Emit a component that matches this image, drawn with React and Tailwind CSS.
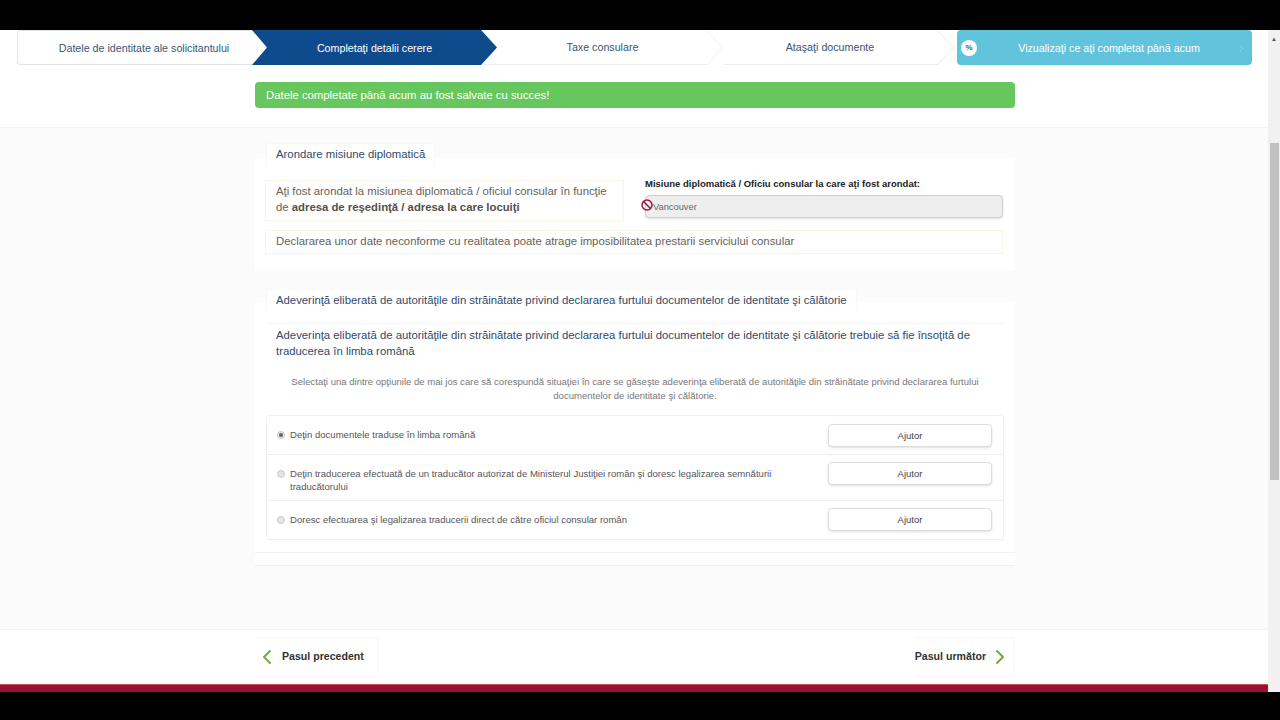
import { ChevronLeft, ChevronRight, Ban } from "lucide-react";

const options = [
  { text: "Deţin documentele traduse în limba română", checked: true, rowClass: "h-[39px]" },
  {
    text: "Deţin traducerea efectuată de un traducător autorizat de Ministerul Justiţiei român şi doresc legalizarea semnăturii traducătorului",
    rowClass: "h-[46px]",
  },
  { text: "Doresc efectuarea şi legalizarea traducerii direct de către oficiul consular român", rowClass: "h-[39px]" },
];

const StepArrow = ({ className }) => (
  <svg viewBox="0 0 16 35" preserveAspectRatio="none" className={`h-[35px] shrink-0 ${className}`}>
    <path d="M0 0 L15 17.5 L0 35" fill="none" stroke="#f0f0f0" strokeWidth="1" />
  </svg>
);

const Stepper = () => (
  <div className="flex h-[35px] pl-[17px] pr-[16px] text-[10.7px] text-[#3a5675]">
    <div className="flex w-[237px] items-center justify-center rounded-l-sm border-y border-l border-[#e4e4e4] bg-white pl-[16px] pt-[1px]">
      Datele de identitate ale solicitantului
    </div>
    <div className="relative z-10 -ml-[2px] flex w-[245px] items-center justify-center bg-[#0f4a8c] pt-[1px] text-white [clip-path:polygon(0_0,93.5%_0,100%_50%,93.5%_100%,0_100%,6.1%_50%)]">
      Completaţi detalii cerere
    </div>
    <div className="-ml-[14px] flex w-[224px] items-center justify-center border-b border-[#eeeeee] bg-white pl-[15px] pt-[1px]">
      Taxe consulare
    </div>
    <StepArrow className="w-[16px]" />
    <div className="flex w-[214px] items-center justify-center border-b border-[#eeeeee] bg-white pt-[1px]">
      Ataşaţi documente
    </div>
    <StepArrow className="w-[18px]" />
    <div className="ml-[2px] flex w-[295px] items-center rounded-sm bg-[#62c4dc] pl-[4px] pr-[6px] pt-[1px] text-white">
      <span className="flex h-[16px] w-[16px] items-center justify-center rounded-full bg-white text-[8px] font-bold text-[#44606e]">%</span>
      <span className="flex-1 pl-[4px] text-center">Vizualizaţi ce aţi completat până acum</span>
      <ChevronRight size={9} className="text-[#9adcec]" />
    </div>
  </div>
);

const Tab = ({ children }) => (
  <div className="relative z-10 ml-[11px] flex h-[22px] w-fit items-center border-x border-t border-[#f8f8f8] bg-white px-[9px] text-[11.33px] text-[#2f4a6b]">
    {children}
  </div>
);

const App = () => (
  <div className="flex h-[720px] flex-col overflow-hidden bg-black font-['Liberation_Sans',Arial,sans-serif]">
    <div className="mt-[30px] flex h-[662px]">
      <div className="flex w-[1268px] flex-col bg-white">
        <Stepper />

        <div className="mx-auto mt-[17px] flex h-[26px] w-[760px] translate-x-[1px] items-center rounded-sm bg-[#66c75f] px-[11px] text-[11.33px] text-white">
          Datele completate până acum au fost salvate cu succes!
        </div>

        <div className="mt-[19px] flex flex-1 flex-col items-center border-y border-[#f3f3f3] bg-[#fbfbfb] pt-[15px]">
          <div className="w-[760px] translate-x-[1px]">
            <Tab>Arondare misiune diplomatică</Tab>
            <div className="-mt-[7px] h-[113px] bg-white px-[10px] pt-[22px]">
              <div className="flex items-start">
                <div className="h-[41px] w-[359px] border border-[#f8f4e8] px-[10px] py-[2px] text-[11.33px] leading-[16px] text-[#66625a]">
                  Aţi fost arondat la misiunea diplomatică / oficiul consular în funcţie de <b className="text-[#55504a]">adresa de reşedinţă / adresa la care locuiţi</b>
                </div>
                <div className="ml-[21px] flex-1">
                  <div className="-mt-[2px] h-[17px] text-[9.5px] font-bold leading-[12px] text-[#222222]">
                    Misiune diplomatică / Oficiu consular la care aţi fost arondat:
                  </div>
                  <div className="relative flex h-[23px] w-[358px] items-center rounded-sm border border-[#d0d0d0] bg-[#eeeeee] pl-[7px] pt-[2px] text-[9.3px] text-[#66666a] shadow-sm">
                    <Ban size={12} strokeWidth={3} className="absolute -left-[5px] top-[3px] text-[#a01840]" />
                    Vancouver
                  </div>
                </div>
              </div>
              <div className="mt-[9px] flex h-[24px] w-[738px] items-center border border-[#f8f4e8] px-[10px] pb-[2px] text-[11.33px] text-[#66625a]">
                Declararea unor date neconforme cu realitatea poate atrage imposibilitatea prestarii serviciului consular
              </div>
            </div>

            <div className="mt-[18px]">
              <Tab>Adeverinţă eliberată de autorităţile din străinătate privind declararea furtului documentelor de identitate şi călătorie</Tab>
            </div>
            <div className="-mt-[9px] h-[264px] border-b border-[#efefef] bg-white px-[11px] pt-[21px]">
              <div className="h-[64px] border-t border-[#f3f3f3] px-[10px] pt-[3px] text-[11.33px] leading-[16px] text-[#2f4a6b]">
                Adeverinţa eliberată de autorităţile din străinătate privind declararea furtului documentelor de identitate şi călătorie trebuie să fie însoţită de traducerea în limba română
              </div>
              <p className="-mt-[12px] px-[20px] text-center text-[9.55px] leading-[14px] text-[#77777a]">
                Selectaţi una dintre opţiunile de mai jos care să corespundă situaţiei în care se găseşte adeverinţa eliberată de autorităţile din străinătate privind declararea furtului documentelor de identitate şi călătorie.
              </p>
              <div className="mt-[12px] w-[738px] rounded-sm border-x border-t border-[#f0f0f0]">
                {options.map((o) => (
                  <div key={o.text} className={`flex items-start border-b border-[#eeeeee] pl-[10px] pr-[11px] pt-[7px] ${o.rowClass}`}>
                    <span className="mt-[8px] flex h-[8px] w-[8px] shrink-0 items-center justify-center rounded-full border border-[#c8c8c8] bg-[#e4e4e4]">
                      {o.checked && <span className="h-[4px] w-[4px] rounded-full bg-[#666666]" />}
                    </span>
                    <span className="ml-[5px] mt-[5px] w-[500px] text-[9.55px] leading-[13px] text-[#55555a]">{o.text}</span>
                    <button className={`ml-auto h-[23px] w-[164px] rounded-sm border border-[#dddddd] bg-white pt-[1px] text-[9.5px] text-[#444444] shadow-sm ${o.checked ? "mt-[1px]" : ""}`}>
                      Ajutor
                    </button>
                  </div>
                ))}
              </div>
              <div className="-mx-[11px] mt-[12px] border-t border-[#f0f0f0]" />
            </div>
          </div>
        </div>

        <div className="flex h-[54px] items-center justify-between bg-white pl-[255px] pr-[254px] text-[10.6px] font-bold text-[#333333]">
          <div className="flex h-[40px] items-center border-y border-r border-[#f8f8f8] pr-[14px]">
            <ChevronLeft size={24} strokeWidth={2} className="mr-[3px] text-[#78a83c]" />
            Pasul precedent
          </div>
          <div className="flex h-[40px] items-center border-y border-r border-[#f8f8f8] pr-[1px]">
            Pasul următor
            <ChevronRight size={24} strokeWidth={2} className="ml-[2px] text-[#78a83c]" />
          </div>
        </div>
        <div className="h-[8px] border-t border-[#c85060] bg-[#9c1030]" />
      </div>

      <div className="flex w-[12px] flex-col items-center bg-[#f1f1f1]">
        <span className="mt-[5px] text-[6px] leading-[8px] text-[#505050]">▲</span>
        <div className="mt-[100px] h-[337px] w-[9px] bg-[#c0c0c0]" />
      </div>
    </div>
  </div>
);

export default App;
